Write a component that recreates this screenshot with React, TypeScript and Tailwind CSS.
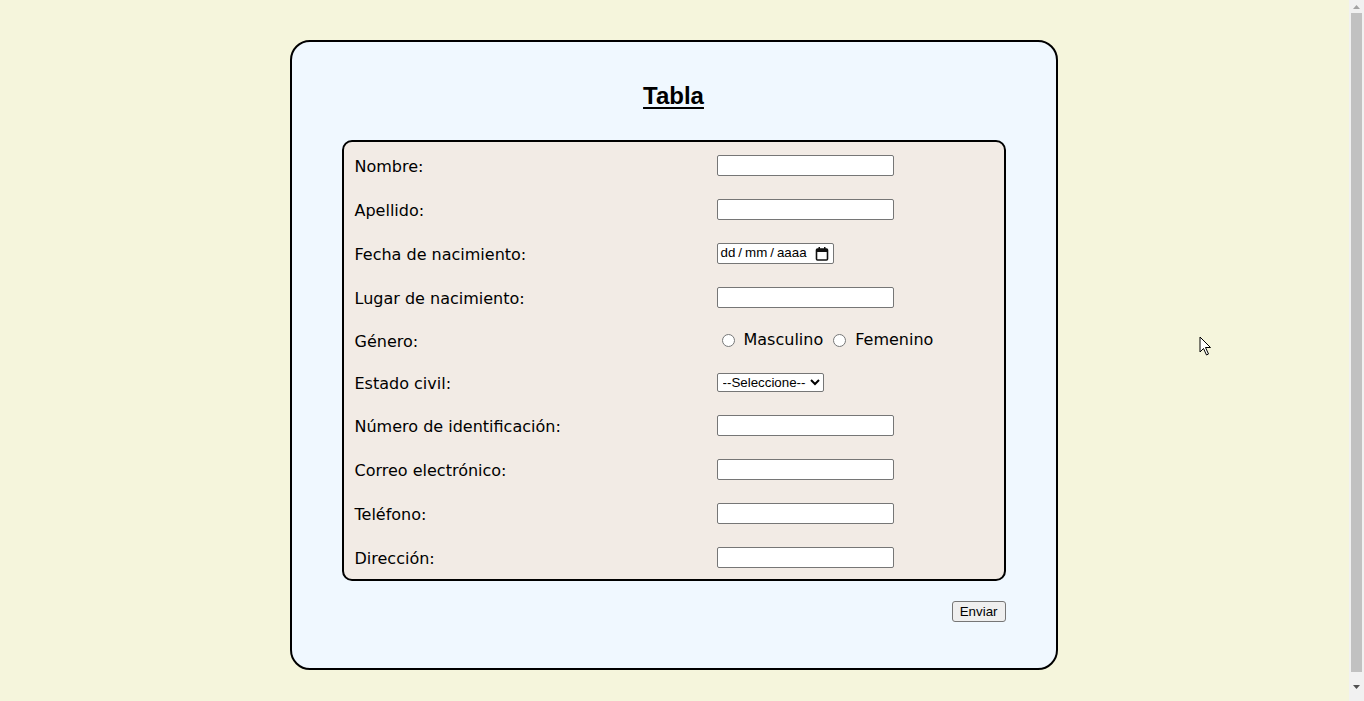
import React from "react";

const fields: { label: string; kind: "text" | "date" | "radio" | "select" }[] = [
  { label: "Nombre:", kind: "text" },
  { label: "Apellido:", kind: "text" },
  { label: "Fecha de nacimiento:", kind: "date" },
  { label: "Lugar de nacimiento:", kind: "text" },
  { label: "Género:", kind: "radio" },
  { label: "Estado civil:", kind: "select" },
  { label: "Número de identificación:", kind: "text" },
  { label: "Correo electrónico:", kind: "text" },
  { label: "Teléfono:", kind: "text" },
  { label: "Dirección:", kind: "text" },
];

const Field = ({ kind }: { kind: string }) => {
  if (kind === "date") {
    return (
      <div className="flex h-[21px] w-[117px] items-center justify-between rounded-[2px] border border-[#767676] bg-white pl-[3px] pr-[2px] font-['Liberation_Sans',Arial,sans-serif] text-[13.33px] text-black">
        <span className="flex items-center gap-[3px]">
          <span>dd</span>
          <span>/</span>
          <span>mm</span>
          <span>/</span>
          <span>aaaa</span>
        </span>
        <svg width="14" height="15" viewBox="0 0 14 15" className="mr-[2px]">
          <rect x="1.5" y="3" width="11" height="11" rx="1" fill="none" stroke="#111" strokeWidth="1.6" />
          <rect x="1.5" y="3" width="11" height="3" fill="#111" />
          <rect x="3.5" y="1" width="1.5" height="3" fill="#111" />
          <rect x="9" y="1" width="1.5" height="3" fill="#111" />
        </svg>
      </div>
    );
  }
  if (kind === "radio") {
    return (
      <div className="flex items-center text-[16px]">
        <input type="radio" name="genero" className="ml-[5px] mr-[3px] h-[13px] w-[13px]" />
        <span className="ml-[6px]">Masculino</span>
        <input type="radio" name="genero" className="ml-[10px] mr-[3px] h-[13px] w-[13px]" />
        <span className="ml-[6px]">Femenino</span>
      </div>
    );
  }
  if (kind === "select") {
    return (
      <select className="h-[19px] w-[107px] rounded-[2px] border border-[#767676] bg-white pl-[1px] font-['Liberation_Sans',Arial,sans-serif] text-[13.33px] text-black">
        <option>--Seleccione--</option>
      </select>
    );
  }
  return (
    <input
      type="text"
      className="h-[21px] w-[177px] rounded-[2px] border border-[#767676] bg-white px-[2px] text-[13px]"
    />
  );
};

// fake classic scrollbar, the page in the shot is slightly taller than the window
const Scrollbar = () => (
  <div className="flex h-screen w-[15px] shrink-0 flex-col bg-[#f1f1f1]">
    <div className="flex h-[13px] items-center justify-center">
      <svg width="7" height="4" viewBox="0 0 7 4">
        <path d="M0 4 L3.5 0 L7 4 Z" fill="#a3a3a3" />
      </svg>
    </div>
    <div className="mx-[2px] h-[659px] bg-[#c1c1c1]" />
    <div className="flex flex-1 items-center justify-center">
      <svg width="7" height="4" viewBox="0 0 7 4">
        <path d="M0 0 L7 0 L3.5 4 Z" fill="#505050" />
      </svg>
    </div>
  </div>
);

export default function App() {
  return (
    <div className="flex h-screen overflow-hidden bg-[#f5f5dc] font-['DejaVu_Sans',Verdana,sans-serif] text-black">
      <div className="relative flex-1 pb-[48px] pr-[2px] pt-[40px]">
        <div className="mx-auto w-[768px] rounded-[20px] border-2 border-black bg-[#f0f8ff] px-[50px] pb-[46px] pt-[40px]">
          <h1 className="mb-[30px] text-center font-['Liberation_Sans',Arial,sans-serif] text-[24px] font-bold leading-[28px] underline decoration-2 underline-offset-[3px]">
            Tabla
          </h1>

          <div className="rounded-[10px] border-2 border-black bg-[#f2ebe5] pt-[1px]">
            {fields.map(({ label, kind }) => (
              <div
                key={label}
                className={
                  kind === "radio" || kind === "select"
                    ? "grid h-[42px] grid-cols-[373px_1fr] items-center"
                    : "grid h-[44px] grid-cols-[373px_1fr] items-center"
                }
              >
                <span className="pl-[11px] pt-[3px] text-[16px]">{label}</span>
                <Field kind={kind} />
              </div>
            ))}
          </div>

          <div className="mt-[20px] flex justify-end">
            <button className="h-[21px] rounded-[3px] border border-[#767676] bg-[#efefef] px-[7px] font-['Liberation_Sans',Arial,sans-serif] text-[13.33px] leading-none">
              Enviar
            </button>
          </div>
        </div>

        <svg
          width="14"
          height="21"
          viewBox="0 0 14 21"
          className="absolute left-[1199px] top-[336px]"
        >
          <path d="M1 1 L1 16 L4.5 12.5 L7.5 19 L9.5 18 L6.5 11.5 L11.5 11.5 Z" fill="#fff" stroke="#000" strokeWidth="1" />
        </svg>
      </div>
      <Scrollbar />
    </div>
  );
}
